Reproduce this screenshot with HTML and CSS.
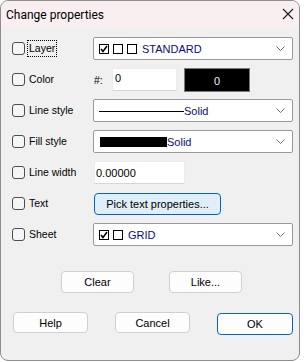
FILE: index.html
```html
<!DOCTYPE html>
<html>
<head>
<meta charset="utf-8">
<title>Change properties</title>
<link rel="stylesheet" href="styles.css">
</head>
<body>
<div class="window">
  <div class="titlebar">
    <span class="title">Change properties</span>
    <svg class="close" width="12" height="12" viewBox="0 0 12 12"><path d="M1 1 L11 11 M11 1 L1 11" stroke="#1a1a1a" stroke-width="1.1" fill="none"/></svg>
  </div>
  <div class="content">
    <div class="rows">
      <div class="row">
        <div class="opt"><span class="cb"></span><span class="lbl focus">Layer</span></div>
        <div class="combo">
          <span class="mini"><svg width="8" height="8" viewBox="0 0 8 8"><path d="M1 4 L3 6.5 L7 1" stroke="#000" stroke-width="1.6" fill="none"/></svg></span>
          <span class="mini"></span>
          <span class="mini"></span>
          <span class="val">STANDARD</span>
          <svg class="chev" width="9" height="5" viewBox="0 0 9 5"><path d="M0.5 0.5 L4.5 4.5 L8.5 0.5" stroke="#707070" stroke-width="1" fill="none"/></svg>
        </div>
      </div>
      <div class="row">
        <div class="opt"><span class="cb"></span><span class="lbl">Color</span></div>
        <div class="colorctl">
          <span class="hash">#:</span>
          <span class="field colorfield">0</span>
          <span class="swatch">0</span>
        </div>
      </div>
      <div class="row">
        <div class="opt"><span class="cb"></span><span class="lbl">Line style</span></div>
        <div class="combo">
          <span class="linesample"></span>
          <span class="val">Solid</span>
          <svg class="chev" width="9" height="5" viewBox="0 0 9 5"><path d="M0.5 0.5 L4.5 4.5 L8.5 0.5" stroke="#707070" stroke-width="1" fill="none"/></svg>
        </div>
      </div>
      <div class="row">
        <div class="opt"><span class="cb"></span><span class="lbl">Fill style</span></div>
        <div class="combo">
          <span class="fillsample"></span>
          <span class="val">Solid</span>
          <svg class="chev" width="9" height="5" viewBox="0 0 9 5"><path d="M0.5 0.5 L4.5 4.5 L8.5 0.5" stroke="#707070" stroke-width="1" fill="none"/></svg>
        </div>
      </div>
      <div class="row">
        <div class="opt"><span class="cb"></span><span class="lbl">Line width</span></div>
        <div><span class="field widthfield">0.00000</span></div>
      </div>
      <div class="row">
        <div class="opt"><span class="cb"></span><span class="lbl">Text</span></div>
        <div><button class="btn pick">Pick text properties...</button></div>
      </div>
      <div class="row">
        <div class="opt"><span class="cb"></span><span class="lbl">Sheet</span></div>
        <div class="combo">
          <span class="mini"><svg width="8" height="8" viewBox="0 0 8 8"><path d="M1 4 L3 6.5 L7 1" stroke="#000" stroke-width="1.6" fill="none"/></svg></span>
          <span class="mini"></span>
          <span class="val">GRID</span>
          <svg class="chev" width="9" height="5" viewBox="0 0 9 5"><path d="M0.5 0.5 L4.5 4.5 L8.5 0.5" stroke="#707070" stroke-width="1" fill="none"/></svg>
        </div>
      </div>
    </div>
    <div class="midbuttons">
      <button class="btn mid">Clear</button>
      <button class="btn mid">Like...</button>
    </div>
    <div class="bottombuttons">
      <button class="btn bot">Help</button>
      <button class="btn bot">Cancel</button>
      <button class="btn bot ok">OK</button>
    </div>
  </div>
</div>
</body>
</html>
```
FILE: styles.css
```css
html, body {
  margin: 0;
  padding: 0;
  background: #ffffff;
}

.window {
  box-sizing: border-box;
  width: 300px;
  height: 361px;
  border: 1px solid #8e8e8e;
  border-radius: 8px;
  overflow: hidden;
  background: #f0f0f0;
  font-family: "Liberation Sans", Arial, sans-serif;
  font-size: 10.5px;
  color: #000;
}

.titlebar {
  height: 26px;
  background: #f9eff1;
  display: flex;
  align-items: center;
  justify-content: space-between;
  padding: 0 5px 0 5px;
}

.title {
  font-family: Roboto, "Noto Sans", sans-serif;
  font-size: 12px;
  color: #000;
  margin-top: 1px;
}

.close {
  display: block;
}

.content {
  padding: 6px 0 0 11px;
}

.row {
  display: grid;
  grid-template-columns: 81px auto;
  align-items: center;
  height: 31px;
}

.opt {
  display: flex;
  align-items: center;
}

.cb {
  box-sizing: border-box;
  width: 13px;
  height: 13px;
  border: 1px solid #4d4d4d;
  border-radius: 3px;
  background: #f6f6f6;
}

.lbl {
  margin-left: 4px;
  line-height: 13px;
}

.focus {
  outline: 1px dotted #000;
  outline-offset: 1px;
}

.combo {
  box-sizing: border-box;
  width: 200px;
  height: 23px;
  background: #fff;
  border: 1px solid #999;
  border-radius: 2px;
  display: flex;
  align-items: center;
  padding-left: 5px;
  position: relative;
}

.mini {
  box-sizing: border-box;
  width: 10px;
  height: 10px;
  border: 1px solid #000;
  margin-right: 4px;
  display: flex;
  align-items: center;
  justify-content: center;
  background: #fff;
}

.mini + .val {
  margin-left: 1px;
}

.val {
  color: #0c0c78;
  font-size: 11px;
}

.chev {
  position: absolute;
  right: 7px;
  top: 8px;
}

.linesample {
  width: 85px;
  height: 1px;
  background: #000;
  margin-top: 2px;
}

.fillsample {
  width: 67px;
  height: 10px;
  background: #000;
  margin-left: 1px;
}

.colorctl {
  display: flex;
  align-items: center;
}

.hash {
  width: 18px;
  margin-left: 1px;
}

.field {
  box-sizing: border-box;
  display: flex;
  align-items: center;
  height: 23px;
  background: #fff;
  border: 1px solid #ececec;
  border-bottom-color: #d6d6d6;
  font-size: 11px;
}

.colorfield {
  width: 65px;
  padding: 0 0 4px 2px;
}

.widthfield {
  width: 91px;
  margin-left: 1px;
  padding-left: 1px;
}

.swatch {
  box-sizing: border-box;
  width: 66px;
  height: 24px;
  margin-left: 7px;
  background: #000;
  border: 1px solid #7a7a7a;
  color: #e8f2ff;
  display: flex;
  align-items: center;
  justify-content: center;
  padding-top: 3px;
  font-size: 11px;
}

.btn {
  box-sizing: border-box;
  font-family: "Liberation Sans", Arial, sans-serif;
  font-size: 11px;
  color: #000;
  background: #fdfdfd;
  border: 1px solid #d0d0d0;
  border-radius: 4px;
  padding: 0;
  height: 22px;
}

.pick {
  width: 127px;
  margin-left: 1px;
  background: #e0eef9;
  border-color: #0067c0;
}

.midbuttons {
  display: flex;
  gap: 35px;
  margin: 21px 0 0 49px;
}

.mid {
  width: 73px;
}

.bottombuttons {
  display: flex;
  align-items: flex-start;
  gap: 27px;
  margin: 19px 0 0 1px;
}

.bot {
  width: 75px;
  height: 21px;
}

.ok {
  width: 76px;
  height: 22px;
  margin-top: 1px;
  border-color: #0067c0;
}
```
